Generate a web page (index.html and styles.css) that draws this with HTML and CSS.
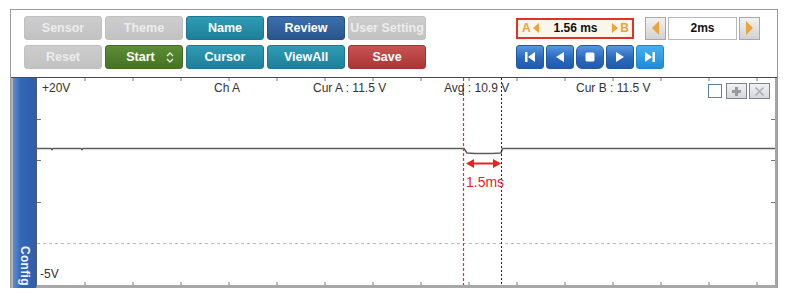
FILE: index.html
```html
<!DOCTYPE html>
<html lang="en">
<head>
    <meta charset="UTF-8">
    <title>Scope</title>
    <link rel="stylesheet" href="styles.css">
</head>
<body>
    <div class="panel">
        <div class="toolbar">
            <div class="buttons">
                <button class="btn gray">Sensor</button>
                <button class="btn gray">Theme</button>
                <button class="btn teal">Name</button>
                <button class="btn navy">Review</button>
                <button class="btn gray">User Setting</button>
                <button class="btn gray">Reset</button>
                <button class="btn green">Start
                    <svg class="updown" width="8" height="11" viewBox="0 0 8 11"><path d="M1 4 L4 1 L7 4 M1 7 L4 10 L7 7" fill="none" stroke="#e6eede" stroke-width="1.4"/></svg>
                </button>
                <button class="btn teal">Cursor</button>
                <button class="btn teal">ViewAll</button>
                <button class="btn red">Save</button>
            </div>

            <div class="controls">
                <div class="control-row">
                    <div class="readout">
                        <span class="mark">A<i class="tri-left"></i></span>
                        <span class="value">1.56 ms</span>
                        <span class="mark"><i class="tri-right"></i>B</span>
                    </div>
                    <div class="stepper">
                        <div class="step"><i class="tri-left"></i></div>
                        <div class="step-value">2ms</div>
                        <div class="step"><i class="tri-right"></i></div>
                    </div>
                </div>
                <div class="media">
                    <div class="mbtn"><svg width="12" height="10" viewBox="0 0 12 10"><rect x="1" y="0" width="2.5" height="10" fill="#fff"/><path d="M11 0 L4 5 L11 10 Z" fill="#fff"/></svg></div>
                    <div class="mbtn"><svg width="10" height="10" viewBox="0 0 10 10"><path d="M9 0 L1 5 L9 10 Z" fill="#fff"/></svg></div>
                    <div class="mbtn stop"><svg width="10" height="10" viewBox="0 0 10 10"><rect x="0.5" y="0.5" width="9" height="9" rx="1.5" fill="#fff"/></svg></div>
                    <div class="mbtn"><svg width="10" height="10" viewBox="0 0 10 10"><path d="M1 0 L9 5 L1 10 Z" fill="#fff"/></svg></div>
                    <div class="mbtn light"><svg width="12" height="10" viewBox="0 0 12 10"><path d="M1 0 L8 5 L1 10 Z" fill="#fff"/><rect x="8.5" y="0" width="2.5" height="10" fill="#fff"/></svg></div>
                </div>
            </div>
        </div>

        <div class="scope">
            <div class="config"><span>Config</span></div>
            <div class="chart">
                <svg class="plot" width="738" height="207" viewBox="0 0 738 207">
                    <g stroke="#777" stroke-width="1">
                        <path d="M48 0v3 M96 0v3 M144 0v3 M192 0v3 M240 0v3 M288 0v3 M336 0v3 M384 0v3 M432 0v3 M480 0v3 M528 0v3 M576 0v3 M624 0v3 M672 0v3 M720 0v3"/>
                        <path d="M48 207v-3 M96 207v-3 M144 207v-3 M192 207v-3 M240 207v-3 M288 207v-3 M336 207v-3 M384 207v-3 M432 207v-3 M480 207v-3 M528 207v-3 M576 207v-3 M624 207v-3 M672 207v-3 M720 207v-3"/>
                        <path d="M0 41.5h4 M0 82.5h4 M0 124.5h4 M738 41.5h-4 M738 82.5h-4 M738 124.5h-4"/>
                    </g>
                    <path d="M0 165.5H738" stroke="#b8b8b8" stroke-width="1" stroke-dasharray="3 3"/>

                    <path d="M0 70.5 H14 l1 1 l1 -1 H44 l1 1 l1 -1 H427 L430 75 Q446 76 464 75 L465.5 70.5 H738" fill="none" stroke="#5c5c5c" stroke-width="1.6"/>

                    <path d="M426.5 0V207" stroke="#e0302c" stroke-width="1.2" stroke-dasharray="3 2"/>
                    <path d="M464.5 0V207" stroke="#222" stroke-width="1" stroke-dasharray="2 2"/>

                    <path d="M436 85.5H458" stroke="#e8231f" stroke-width="2"/>
                    <path d="M429 85.5 L437 81 L437 90 Z M464 85.5 L456 81 L456 90 Z" fill="#e8231f"/>

                    <text class="lbl" x="5" y="14">+20V</text>
                    <text class="lbl" x="177" y="14">Ch A</text>
                    <text class="lbl" x="276" y="14">Cur A : 11.5 V</text>
                    <text class="lbl" x="407" y="14">Avg : 10.9 V</text>
                    <text class="lbl" x="539" y="14">Cur B : 11.5 V</text>
                    <text class="lbl" x="3" y="200">-5V</text>
                    <text class="delta" x="429" y="109">1.5ms</text>
                </svg>
                <div class="chart-tools">
                    <span class="check"></span>
                    <span class="tool"><svg width="11" height="11" viewBox="0 0 11 11"><path d="M5.5 1V10 M1 5.5H10" stroke="#9a9a9a" stroke-width="3"/></svg></span>
                    <span class="tool"><svg width="11" height="11" viewBox="0 0 11 11"><path d="M1.5 1.5L9.5 9.5 M9.5 1.5L1.5 9.5" stroke="#a8a8a8" stroke-width="1.4"/></svg></span>
                </div>
            </div>
        </div>
    </div>
</body>
</html>
```

FILE: styles.css
```css
* {
    box-sizing: border-box;
}

body {
    margin: 0;
    background-color: #fff;
    font-family: "Liberation Sans", Arial, sans-serif;
}

.panel {
    margin: 9px 0 0 10px;
    width: 768px;
    border: 1px solid #9a9a9a;
    border-bottom: none;
}

/* top toolbar */
.toolbar {
    display: flex;
    height: 68px;
    padding: 6px 0 0 13px;
    border-bottom: 1px solid #4a4a4a;
}

.buttons {
    display: grid;
    grid-template-columns: repeat(5, 78px);
    grid-auto-rows: 24px;
    column-gap: 3px;
    row-gap: 5px;
}

.btn {
    display: flex;
    align-items: center;
    justify-content: center;
    gap: 9px;
    padding: 0;
    border: 1px solid transparent;
    border-radius: 3px;
    font-family: "Liberation Sans", Arial, sans-serif;
    font-size: 12.5px;
    font-weight: bold;
    color: #fff;
    white-space: nowrap;
}

.btn.gray {
    background: linear-gradient(#cdcdcd, #c2c2c2);
    border-color: #c0c0c0;
    color: #ececec;
}

.btn.teal {
    background: linear-gradient(#2f9bb5, #1f7f99);
    border-color: #1d7790;
}

.btn.navy {
    background: linear-gradient(#3b6fab, #29558e);
    border-color: #264f85;
}

.btn.green {
    background: linear-gradient(#5c8d36, #457323);
    border-color: #426d22;
    padding-left: 12px;
}

.btn.red {
    background: linear-gradient(#c95353, #a93636);
    border-color: #a33434;
}

.updown {
    margin-left: 2px;
}

/* right side controls */
.controls {
    margin-left: 90px;
    display: flex;
    flex-direction: column;
    gap: 5px;
}

.control-row {
    display: flex;
    align-items: center;
    height: 24px;
}

.readout {
    display: flex;
    align-items: center;
    justify-content: space-between;
    width: 118px;
    height: 21px;
    padding: 0 3px 0 4px;
    border: 2px solid #e2312c;
    background-color: #fbf6ea;
    font-size: 12px;
    font-weight: bold;
}

.readout .mark {
    display: flex;
    align-items: center;
    gap: 2px;
    color: #eba33c;
}

.readout .value {
    color: #111;
}

.tri-left, .tri-right {
    display: inline-block;
    width: 0;
    height: 0;
    border-top: 5px solid transparent;
    border-bottom: 5px solid transparent;
}

.tri-left {
    border-right: 6px solid #eba33c;
}

.tri-right {
    border-left: 6px solid #eba33c;
}

.stepper {
    display: flex;
    align-items: center;
    gap: 2px;
    margin-left: 11px;
}

.step {
    display: flex;
    align-items: center;
    justify-content: center;
    width: 21px;
    height: 23px;
    border: 1px solid #a8a8a8;
    background: linear-gradient(#f2f2f2, #d2d2d2);
}

.step .tri-left, .step .tri-right {
    border-top-width: 7px;
    border-bottom-width: 7px;
}

.step .tri-left {
    border-right-width: 7px;
}

.step .tri-right {
    border-left-width: 7px;
}

.step-value {
    display: flex;
    align-items: center;
    justify-content: center;
    width: 69px;
    height: 23px;
    border: 1px solid #b8b8b8;
    background-color: #fff;
    font-size: 12px;
    font-weight: bold;
    color: #111;
}

.media {
    display: flex;
    gap: 2px;
}

.mbtn {
    display: flex;
    align-items: center;
    justify-content: center;
    width: 28px;
    height: 24px;
    border: 1px solid #2358a3;
    border-radius: 3px;
    background: linear-gradient(#5797e2, #2a68bd 55%, #1f5cae);
}

.mbtn.stop {
    border-radius: 6px;
}

.mbtn.light {
    border-color: #1f86d0;
    background: linear-gradient(#45b0ef, #1f8ad8);
}

/* scope area */
.scope {
    display: flex;
    height: 210px;
}

.config {
    display: flex;
    align-items: flex-end;
    justify-content: center;
    width: 25px;
    padding-bottom: 2px;
    border-left: 2px solid #b2b2b2;
    background: linear-gradient(to right, #5b8ed6, #3566b6 35%, #2e5dac);
}

.config span {
    writing-mode: vertical-rl;
    font-size: 12px;
    font-weight: bold;
    color: #f2f6ff;
    letter-spacing: 0.3px;
}

.chart {
    position: relative;
    flex: 1;
    border-left: 1px solid #5a5a5a;
    border-right: 2px solid #a4a4a4;
    border-bottom: 3px solid #a8a8a8;
}

.plot {
    display: block;
}

.plot .lbl {
    font-family: "Liberation Sans", Arial, sans-serif;
    font-size: 12px;
    fill: #333;
}

.plot .delta {
    font-family: "Liberation Sans", Arial, sans-serif;
    font-size: 14px;
    fill: #e8231f;
}

.chart-tools {
    position: absolute;
    top: 5px;
    right: 5px;
    display: flex;
    align-items: center;
    gap: 2px;
}

.check {
    width: 14px;
    height: 14px;
    margin-right: 2px;
    border: 1.5px solid #5f7ea6;
    background-color: #fff;
}

.tool {
    display: flex;
    align-items: center;
    justify-content: center;
    width: 21px;
    height: 16px;
    border: 1px solid #7d828c;
    background: linear-gradient(#f0f2f5, #d4d8de);
}
```
